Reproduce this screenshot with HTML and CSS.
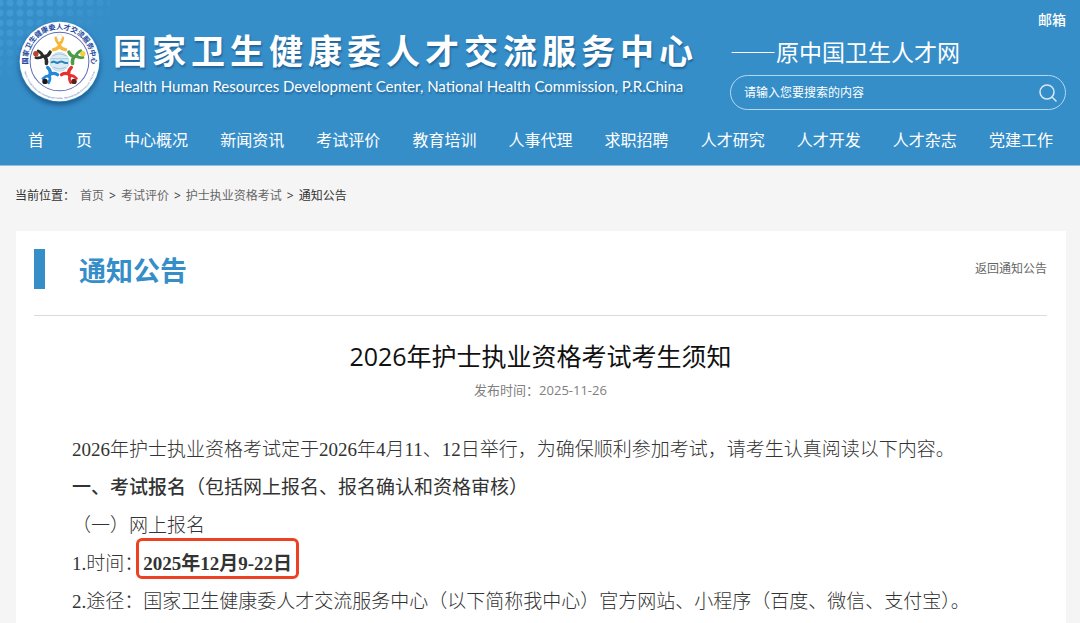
FILE: index.html
```
<!DOCTYPE html>
<html lang="zh-CN">
<head>
    <meta charset="UTF-8">
    <meta name="viewport" content="width=device-width, initial-scale=1.0">
    <title>2026年护士执业资格考试考生须知</title>
    <link rel="stylesheet" href="styles.css">
</head>
<body>
    <header class="header">
        <div class="header-top">
            <a class="brand" href="#">
                <svg class="logo" viewBox="0 0 240 240" aria-hidden="true">
                    <defs>
                        <path id="arc-top" d="M 27 132 A 94 94 0 1 1 213 132"/>
                        <path id="arc-bottom" d="M 13 138 A 108 108 0 0 0 227 138"/>
                        <g id="person">
                            <path d="M109 50 Q111 64 119 68 Q128 64 130 50" fill="none" stroke-width="8" stroke-linecap="round"/>
                            <path d="M120 66 V76 M120 74 Q114 84 102 85 M120 74 Q126 84 138 85" fill="none" stroke-width="10" stroke-linecap="round"/>
                        </g>
                    </defs>
                    <circle cx="120" cy="120" r="118" fill="#fff"/>
                    <circle cx="120" cy="120" r="87" fill="#fff" stroke="#5b6fb5" stroke-width="3"/>
                    <text class="logo-cn"><textPath href="#arc-top" startOffset="50%" text-anchor="middle">国家卫生健康委人才交流服务中心</textPath></text>
                    <text class="logo-en"><textPath href="#arc-bottom" startOffset="50%" text-anchor="middle">Health Human Resources Development Center, National Health Commission, P.R.China</textPath></text>
                    <use href="#person" stroke="#f6b73a"/>
                    <use href="#person" stroke="#4a9c46" transform="rotate(72 120 120)"/>
                    <use href="#person" stroke="#e5322f" transform="rotate(144 120 120)"/>
                    <use href="#person" stroke="#2487d8" transform="rotate(216 120 120)"/>
                    <use href="#person" stroke="#2d2a2b" transform="rotate(288 120 120)"/>
                    <circle cx="120" cy="46" r="8" fill="#fff" stroke="#dcdcdc" stroke-width="2"/>
                    <circle cx="189" cy="97" r="8" fill="#f3cf3c"/>
                    <circle cx="163" cy="179" r="8" fill="#5a2018"/>
                    <circle cx="77" cy="179" r="8" fill="#1c1716"/>
                    <circle cx="50" cy="97" r="8" fill="#b5482b"/>
                    <circle cx="120" cy="121" r="28" fill="#dcebf4" stroke="#b7cedd" stroke-width="2"/>
                    <path d="M94 112 H146 M99 104 Q120 92 141 104 M102 137 Q120 146 138 137" fill="none" stroke="#a7c9df" stroke-width="3"/>
                    <path d="M95 124 Q101 118 107 122 T119 122 T131 122 T145 124" fill="none" stroke="#2785c0" stroke-width="6"/>
                </svg>
                <span class="brand-text">
                    <span class="brand-cn">国家卫生健康委人才交流服务中心</span>
                    <span class="brand-en">Health Human Resources Development Center, National Health Commission, P.R.China</span>
                </span>
            </a>
            <div class="header-side">
                <a class="mail" href="#">邮箱</a>
                <div class="old-name">——原中国卫生人才网</div>
                <form class="search">
                    <input type="text" placeholder="请输入您要搜索的内容" aria-label="搜索">
                    <button type="button" aria-label="搜索">
                        <svg viewBox="0 0 18 18" width="18" height="18">
                            <circle cx="8" cy="8" r="7"/>
                            <path d="M13 13 L17 17"/>
                        </svg>
                    </button>
                </form>
            </div>
        </div>
        <nav class="nav">
            <a href="#">首　　页</a>
            <a href="#">中心概况</a>
            <a href="#">新闻资讯</a>
            <a href="#">考试评价</a>
            <a href="#">教育培训</a>
            <a href="#">人事代理</a>
            <a href="#">求职招聘</a>
            <a href="#">人才研究</a>
            <a href="#">人才开发</a>
            <a href="#">人才杂志</a>
            <a href="#">党建工作</a>
        </nav>
    </header>

    <div class="crumbs">
        <span>当前位置：</span>
        <a href="#">首页</a><span>&gt;</span>
        <a href="#">考试评价</a><span>&gt;</span>
        <a href="#">护士执业资格考试</a><span>&gt;</span>
        <span>通知公告</span>
    </div>

    <main class="panel">
        <div class="panel-head">
            <h2>通知公告</h2>
            <a href="#">返回通知公告</a>
        </div>
        <article class="article">
            <h1>2026年护士执业资格考试考生须知</h1>
            <div class="date">发布时间：2025-11-26</div>
            <div class="content">
                <p>2026年护士执业资格考试定于2026年4月11、12日举行，为确保顺利参加考试，请考生认真阅读以下内容。</p>
                <p class="section"><b>一、考试报名</b>（包括网上报名、报名确认和资格审核）</p>
                <p>（一）网上报名</p>
                <p>1.时间：<strong class="marked">2025年12月9-22日</strong></p>
                <p>2.途径：国家卫生健康委人才交流服务中心（以下简称我中心）官方网站、小程序（百度、微信、支付宝）。</p>
            </div>
        </article>
    </main>
</body>
</html>
```
FILE: styles.css
```
* {
    box-sizing: border-box;
}

body {
    margin: 0;
    background-color: #f5f5f5;
    color: #333;
    font-family: "Open Sans", "Noto Sans CJK SC", sans-serif;
    font-size: 12px;
}

a {
    color: inherit;
    text-decoration: none;
}

.header {
    position: relative;
    background-color: #368ec9;
    border-bottom: 1px solid #8fc0e0;
    color: #fff;
}

/* faint dots in the corner */
.header::before {
    content: "";
    position: absolute;
    top: 0;
    left: 0;
    width: 110px;
    height: 80px;
    background-image: radial-gradient(circle, #429ad3 3px, transparent 4px);
    background-size: 10px 10px;
    background-position: -5px -2px;
    mask-image: linear-gradient(150deg, #000 20%, transparent 60%);
}

.header-top {
    position: relative;
    display: flex;
    justify-content: space-between;
    height: 115px;
    padding: 0 14px 0 19px;
}

.brand {
    display: flex;
    align-items: flex-start;
    gap: 13px;
    padding-top: 21px;
}

.logo {
    width: 81px;
    height: 81px;
    border-radius: 50%;
    box-shadow: 0 3px 5px rgba(0, 40, 80, 0.5);
}

.logo-cn {
    font-family: "Liberation Serif", "Noto Sans CJK SC", serif;
    font-size: 21px;
    font-weight: bold;
    fill: #24489c;
}

.logo-en {
    font-size: 7px;
    fill: #24489c;
}

.brand-text {
    display: flex;
    flex-direction: column;
    padding-top: 6px;
    text-shadow: 1px 2px 2px rgba(0, 40, 80, 0.4);
    white-space: nowrap;
}

.brand-cn {
    font-size: 34px;
    font-weight: bold;
    line-height: 48px;
    letter-spacing: 5px;
}

.brand-en {
    font-family: Lato, sans-serif;
    font-size: 15px;
    line-height: 22px;
}

.header-side {
    display: flex;
    flex-direction: column;
    flex-shrink: 0;
    width: 336px;
}

.mail {
    align-self: flex-end;
    padding-top: 10px;
    font-size: 14px;
    line-height: 20px;
    font-weight: 500;
}

.old-name {
    padding: 4px 0 6px;
    font-family: "Noto Sans CJK SC", sans-serif;
    font-size: 23px;
    line-height: 35px;
}

.search {
    display: flex;
    align-items: center;
    height: 35px;
    padding: 0 8px 0 13px;
    border: 1px solid #b4d8f0;
    border-radius: 18px;
}

.search input {
    flex: 1;
    min-width: 0;
    padding: 0;
    border: none;
    outline: none;
    background: none;
    color: #fff;
    font-family: inherit;
    font-size: 12px;
}

.search input::placeholder {
    color: #fff;
}

.search button {
    display: flex;
    padding: 0;
    border: none;
    background: none;
    cursor: pointer;
}

.search svg {
    fill: none;
    stroke: #d6eaf7;
    stroke-width: 1.5;
    stroke-linecap: round;
}

.nav {
    position: relative;
    display: flex;
    justify-content: space-between;
    padding: 0 27px 0 28px;
    font-size: 16px;
    line-height: 50px;
    white-space: nowrap;
}

.crumbs {
    display: flex;
    gap: 5px;
    padding: 20px 15px 25px;
    line-height: 20px;
}

.crumbs a {
    color: #666;
}

.panel {
    margin: 0 14px 0 16px;
    padding: 18px 19px 18px 18px;
    background-color: #fff;
}

.panel-head {
    display: flex;
    justify-content: space-between;
    align-items: flex-start;
    padding-bottom: 26px;
    border-bottom: 1px solid #dedada;
}

.panel-head h2 {
    height: 40px;
    margin: 0;
    padding-left: 34px;
    border-left: 11px solid #368ec9;
    color: #368ec9;
    font-size: 27px;
    line-height: 43px;
}

.panel-head a {
    color: #666;
    line-height: 40px;
}

.article h1 {
    margin: 0;
    padding-top: 20px;
    color: #111;
    font-size: 25px;
    font-weight: normal;
    line-height: 40px;
    text-align: center;
}

.date {
    color: #808080;
    font-size: 13px;
    line-height: 28px;
    text-align: center;
}

.content {
    padding: 27px 38px 0;
    font-family: "Liberation Serif", "Noto Sans CJK SC", serif;
    font-size: 19px;
    font-weight: 300;
    line-height: 38px;
    white-space: nowrap;
}

.content p {
    margin: 0;
}

.content .section {
    font-weight: normal;
}

.content b {
    font-weight: 500;
}

.content strong {
    font-weight: bold;
}

.marked {
    position: relative;
}

.marked::after {
    content: "";
    position: absolute;
    inset: -15px -7px -5px;
    border: 3px solid #ee4023;
    border-radius: 6px;
}
```
